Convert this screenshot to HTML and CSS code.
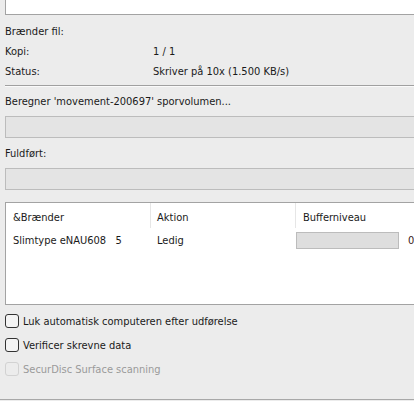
FILE: index.html
```html
<!DOCTYPE html>
<html lang="da">
<head>
	<meta charset="UTF-8">
	<title>Brænder</title>
	<link rel="stylesheet" href="styles.css">
</head>
<body>
	<div class="panel">
		<div class="top-box"></div>

		<div class="info">
			<span class="label">Brænder fil:</span><span></span>
			<span class="label">Kopi:</span><span>1 / 1</span>
			<span class="label">Status:</span><span>Skriver på 10x (1.500 KB/s)</span>
		</div>

		<div class="separator"></div>

		<div class="caption">Beregner 'movement-200697' sporvolumen...</div>
		<div class="progress"></div>

		<div class="caption done">Fuldført:</div>
		<div class="progress"></div>

		<div class="list">
			<div class="list-row list-header">
				<div class="col col-name">&amp;Brænder</div>
				<div class="col col-action">Aktion</div>
				<div class="col col-buffer">Bufferniveau</div>
			</div>
			<div class="list-row">
				<div class="col col-name">Slimtype eNAU608&nbsp;&nbsp;&nbsp;5</div>
				<div class="col col-action">Ledig</div>
				<div class="col col-buffer">
					<div class="buffer-bar"></div>
					<span class="buffer-value">0</span>
				</div>
			</div>
		</div>

		<label class="check"><span class="box"></span>Luk automatisk computeren efter udførelse</label>
		<label class="check"><span class="box"></span>Verificer skrevne data</label>
		<label class="check disabled"><span class="box"></span>SecurDisc Surface scanning</label>
	</div>
</body>
</html>
```

FILE: styles.css
```css
html,
body {
	margin: 0;
	height: 100%;
	overflow: hidden;
}

body {
	background-color: #ececec;
	color: #1a1a1a;
	font-family: "DejaVu Sans Condensed", "Liberation Sans", sans-serif;
	font-size: 11px;
	line-height: 13px;
}

.panel {
	height: 400px;
	padding-left: 5px;
	border-bottom: 1px solid #a8a8a8;
	box-sizing: border-box;
	margin-right: -20px;
}

.top-box {
	height: 14px;
	background: #fff;
	border: 1px solid #a3a3a3;
	border-top: none;
}

.info {
	display: grid;
	grid-template-columns: 148px auto;
	row-gap: 7px;
	margin-top: 10px;
}

.info span {
	height: 13px;
}

.separator {
	margin-top: 7px;
	height: 1px;
	background: #a0a0a0;
	border-bottom: 1px solid #fafafa;
}

.caption {
	margin-top: 8px;
}

.caption.done {
	margin-top: 9px;
}

.progress {
	margin-top: 8px;
	height: 20px;
	background: #e4e4e4;
	border: 1px solid #bcbcbc;
}

.list {
	margin-top: 12px;
	height: 101px;
	background: #fff;
	border: 1px solid #a3a3a3;
}

.list-row {
	display: flex;
}

.list-header .col {
	height: 25px;
	padding-top: 8px;
	box-sizing: border-box;
}

.list-header .col-action,
.list-header .col-buffer {
	border-left: 1px solid #e6e6e6;
}

.col {
	padding-left: 7px;
	box-sizing: border-box;
}

.col-name {
	width: 144px;
}

.col-action {
	width: 145px;
	padding-left: 6px;
}

.list-row:not(.list-header) .col {
	height: 24px;
	display: flex;
	align-items: center;
}

.list-row:not(.list-header) .col-action {
	padding-left: 7px;
}

.list-row:not(.list-header) .col-buffer {
	padding-left: 1px;
}

.buffer-bar {
	width: 101px;
	height: 15px;
	background: #dedede;
	border: 1px solid #bcbcbc;
}

.buffer-value {
	margin-left: 9px;
	color: #3a1a1a;
}

.check {
	display: flex;
	align-items: center;
	margin-top: 8px;
	height: 16px;
}

.check + .check {
	margin-top: 8px;
}

.box {
	width: 12px;
	height: 12px;
	border: 1px solid #333;
	border-radius: 3px;
	background: #f4f4f4;
	margin-right: 4px;
}

.check.disabled {
	color: #9a9a9a;
}

.check.disabled .box {
	border-color: #d2d2d2;
	background: #ececec;
}
```
